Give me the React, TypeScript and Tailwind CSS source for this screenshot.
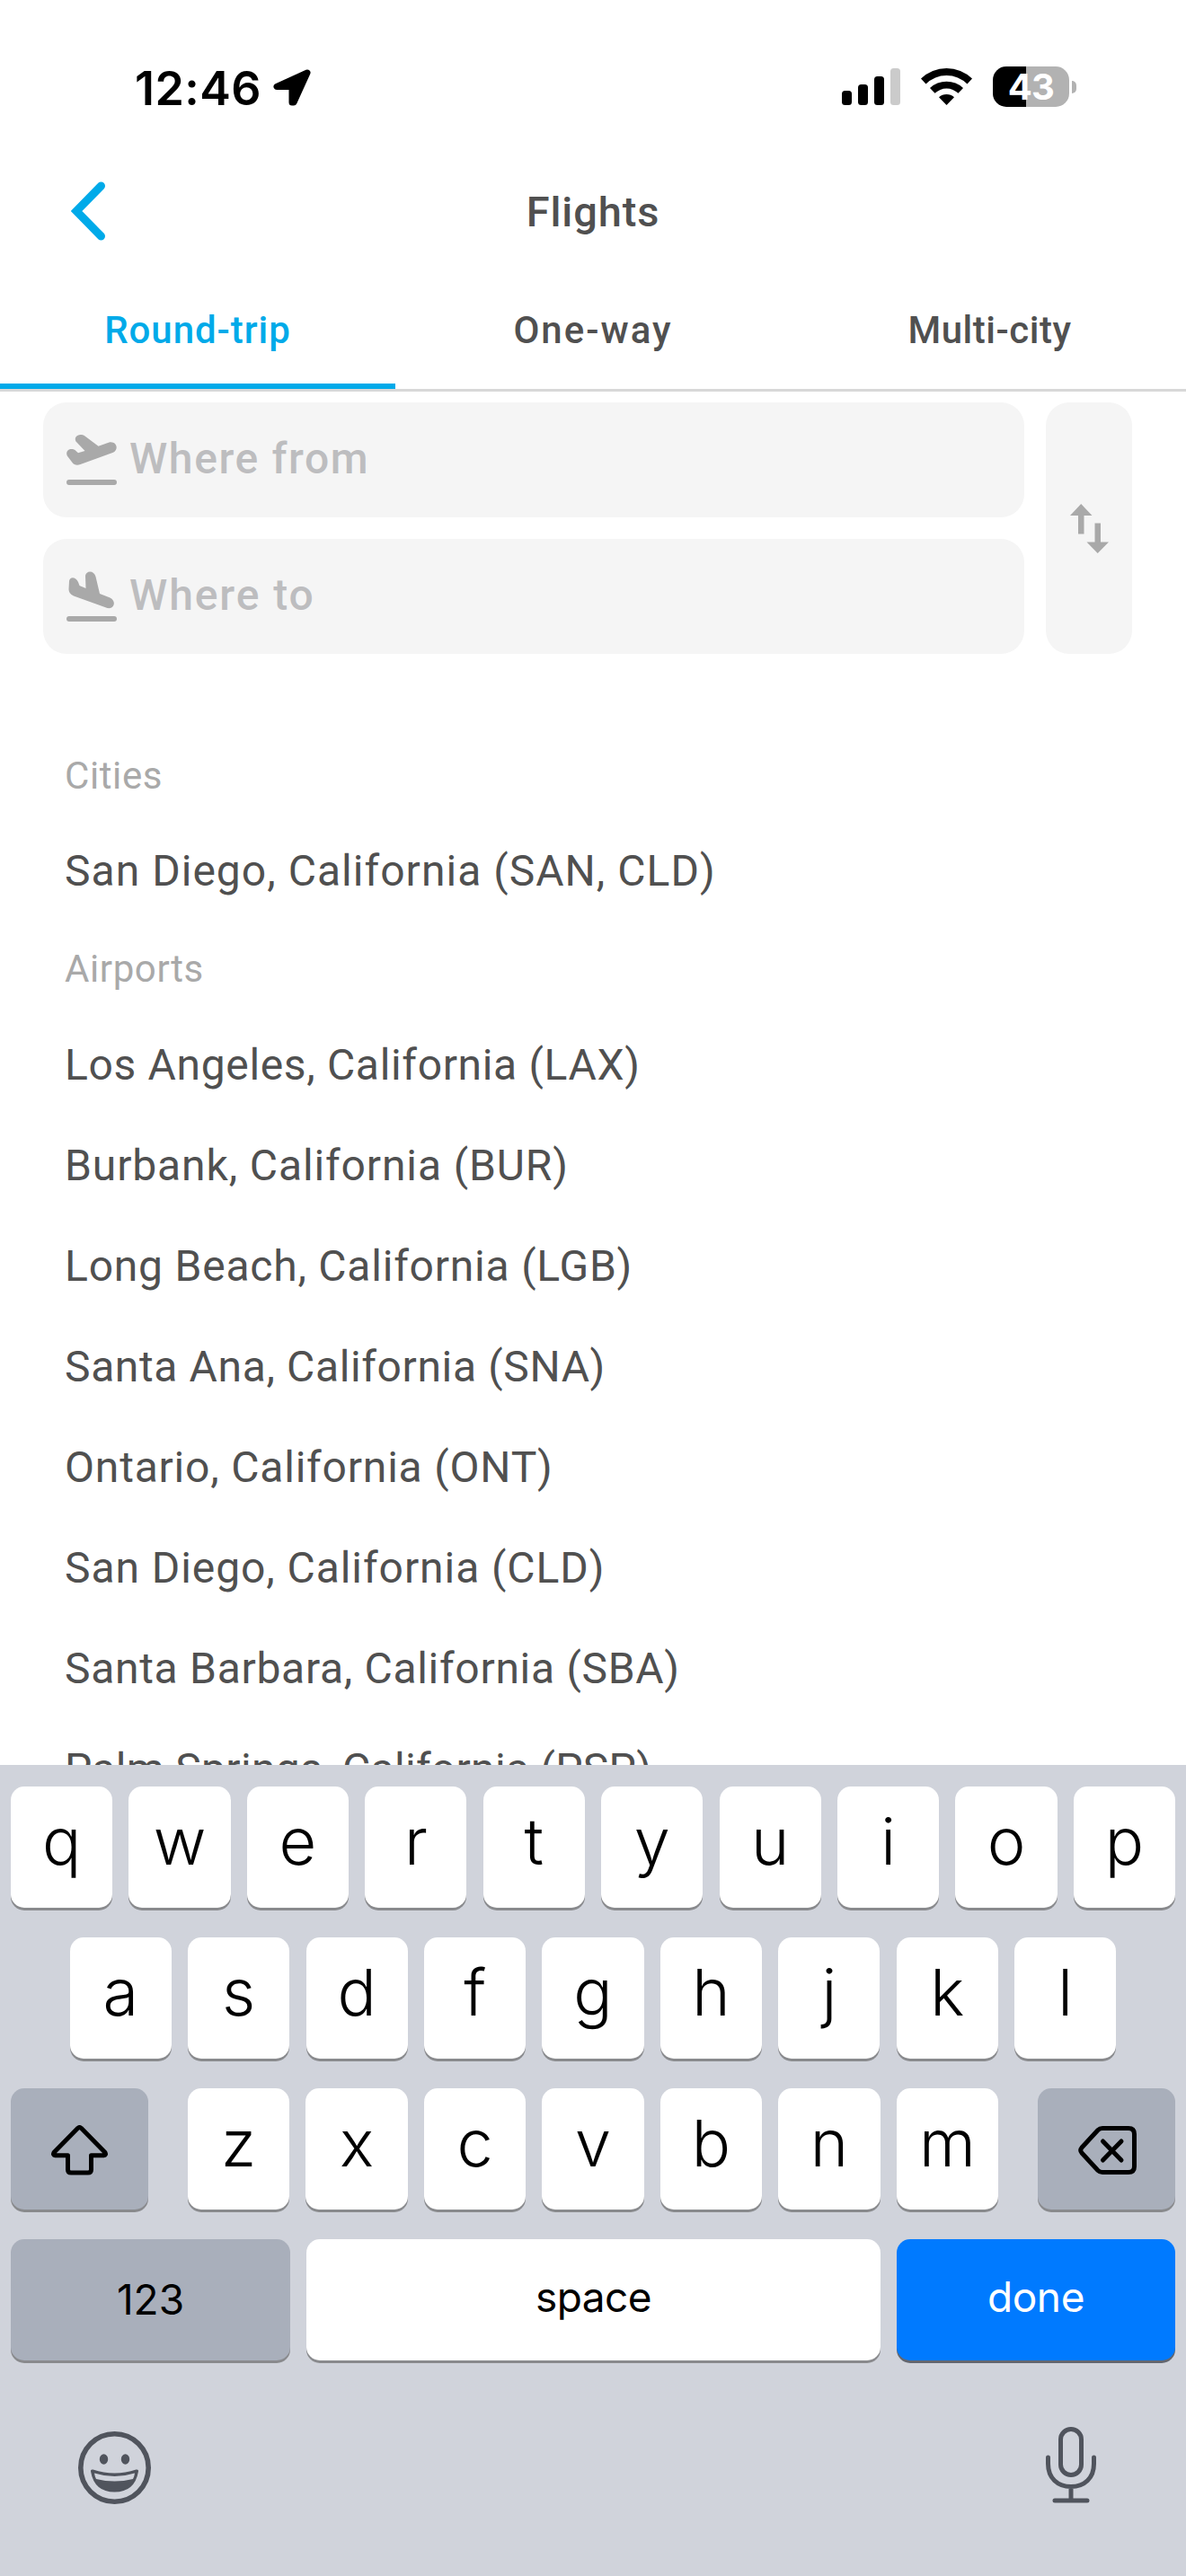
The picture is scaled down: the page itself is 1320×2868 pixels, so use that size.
import type { ReactNode } from "react";

function Key({ children, className = "" }: { children: ReactNode; className?: string }) {
  return (
    <div className={"flex h-[135px] items-center justify-center rounded-[15px] shadow-[0_3px_0_#898a8d] " + className}>
      {children}
    </div>
  );
}

function Letter({ c }: { c: string }) {
  return (
    <Key className="w-[113.2px] bg-white text-black">
      <span className="-mt-[14px] text-[72px] leading-[88px] font-[340]">{c}</span>
    </Key>
  );
}

const places: { name: string; spacing: string }[] = [
  { name: "Los Angeles, California (LAX)", spacing: "tracking-[0.66px]" },
  { name: "Burbank, California (BUR)", spacing: "tracking-[0.88px]" },
  { name: "Long Beach, California (LGB)", spacing: "tracking-[0.78px]" },
  { name: "Santa Ana, California (SNA)", spacing: "tracking-[0.63px]" },
  { name: "Ontario, California (ONT)", spacing: "tracking-[0.8px]" },
  { name: "San Diego, California (CLD)", spacing: "tracking-[0.93px]" },
  { name: "Santa Barbara, California (SBA)", spacing: "tracking-[0.7px]" },
  { name: "Palm Springs, California (PSP)", spacing: "tracking-[0.3px]" },
];

function StatusBar() {
  return (
    <div className="flex h-[176px] items-start pt-[66px] font-['Inter',sans-serif]">
      <div className="ml-[150px] w-[154px] pt-[1px] text-[52px] leading-[63px] font-semibold tracking-[0.4px] text-black">12:46</div>
      <svg className="mt-[11px] h-[42px] w-[43px]" viewBox="0 0 43 42">
        <path d="M38 4 L4 19.500 H21 V37 H23 Z" fill="#000" stroke="#000" strokeWidth="7" strokeLinejoin="round" />
      </svg>
      <svg className="mt-[10px] ml-[590px] h-[41px] w-[65px]" viewBox="0 0 65 41">
        <rect x="0" y="25" width="11" height="16" rx="3.500" />
        <rect x="18" y="18" width="11" height="23" rx="3.500" />
        <rect x="36" y="9" width="11" height="32" rx="3.500" />
        <rect x="54" y="0" width="11" height="41" rx="3.500" fill="#cbcbcb" />
      </svg>
      <svg className="mt-[9px] ml-[23px] h-[42px] w-[57px]" viewBox="0 0 57 42">
        <path d="M0 12.500 A41 41 0 0 1 57 12.500 L51.500 18.500 A32.500 32.500 0 0 0 5.500 18.500 Z" />
        <path d="M10 23 A27 27 0 0 1 47 23 L41.500 28.800 A18.800 18.800 0 0 0 15.500 28.800 Z" />
        <path d="M20 33.300 A12.500 12.500 0 0 1 37 33.300 L28.500 42 Z" />
      </svg>
      <div className="mt-[8px] ml-[23px] flex h-[45px] w-[85px] items-center justify-center rounded-[15px] bg-[linear-gradient(to_right,#000_37px,#b2b2b2_37px)] text-[40px] font-bold tracking-[-0.6px] text-white">
        43
      </div>
      <div className="mt-[24px] ml-[3px] h-[14px] w-[5px] rounded-r-full bg-[#b2b2b2]" />
    </div>
  );
}

function Field({ label, spacing, children }: { label: string; spacing: string; children: ReactNode }) {
  return (
    <div className="flex h-[128px] items-center rounded-[26px] bg-[#f5f5f5] pl-[26px]">
      {children}
      <span className={"-mt-[2px] ml-[14px] text-[48px] font-medium text-[#bdbdbf] " + spacing}>{label}</span>
    </div>
  );
}

export default function App() {
  return (
    <div className="flex h-[2868px] w-[1320px] flex-col overflow-hidden bg-white font-['Roboto',sans-serif]">
      <StatusBar />
      <header className="grid h-[120px] grid-cols-3 items-center">
        <svg className="ml-[79px] -mt-[3px] h-[66px] w-[38px]" viewBox="0 0 38 66">
          <path d="M33.500 5 L6 33 L33.500 61" fill="none" stroke="#00aae9" strokeWidth="9" strokeLinecap="round" />
        </svg>
        <h1 className="text-center text-[47px] font-medium tracking-[0.9px] text-[#505050]">Flights</h1>
      </header>
      <nav className="grid h-[140px] grid-cols-3 border-b-[3px] border-[#d8d8d8] text-center text-[42px] font-medium text-[#505050]">
        <div className="flex items-center justify-center border-b-[6px] border-[#00aae9] pt-[11px] tracking-[0.95px] text-[#00aae9]">Round-trip</div>
        <div className="flex items-center justify-center border-b-[6px] border-transparent pt-[11px] tracking-[2px]">One-way</div>
        <div className="flex items-center justify-center border-b-[6px] border-transparent pt-[11px] pl-[3px] tracking-[0.5px]">Multi-city</div>
      </nav>

      <main className="h-[1529px] overflow-hidden">
        <section className="mt-[12px] flex gap-6 px-12">
          <div className="flex w-[1092px] flex-col gap-6">
            <Field label="Where from" spacing="tracking-[1.6px]">
              <svg className="h-[56px] w-[56px]" viewBox="0 0 56 56" fill="#a9a9a9">
                <path d="M1.500 17.500 C4 15.500 8 15.500 10.500 18 L13 20.300 L20.500 18 L10.500 7.500 C8 3 12.500 -0.500 17 0 Q19 0.300 20.500 1.500 L35.500 12.800 L47.500 8.500 C56 7 58.500 16.500 52 19.800 L15.500 33 C11.500 34.500 8.500 33.500 6.500 31 L0.800 23.500 Q-0.800 20 1.500 17.500 Z" />
                <rect x="0" y="50" width="56" height="6" rx="3" />
              </svg>
            </Field>
            <Field label="Where to" spacing="tracking-[1.9px]">
              <svg className="h-[56px] w-[56px]" viewBox="0 0 56 56" fill="#a9a9a9">
                <path d="M3 11 C3.500 5.500 10.500 6 13 12 L14.500 16 L21.500 19 L21 5 C22 -1.500 31 -1 32.500 6 L37 25 L48.500 29.500 C56 33.500 53 42.500 45.500 41 L8 27.500 C4 25.500 2.500 23 2.500 20 Z" />
                <rect x="0" y="50" width="56" height="6" rx="3" />
              </svg>
            </Field>
          </div>
          <div className="flex w-24 items-center justify-center rounded-[26px] bg-[#f5f5f5]">
            <svg className="h-[55px] w-[43px]" viewBox="0 0 43 55" fill="#a9a9a9">
              <path d="M12.200 0 L24.500 13 H15.500 V33.500 H9 V13 H0 Z" />
              <path d="M27.500 21.500 H34 V42.500 H43 L30.700 55 L18.500 42.500 H27.500 Z" />
            </svg>
          </div>
        </section>

        <section className="mt-[97px] pl-[72px] whitespace-nowrap text-[#505050]">
          <h2 className="flex h-[76px] items-center text-[42px] tracking-[0.6px] text-[#a9a9a9]">Cities</h2>
          <div className="mt-[13px] flex h-[112px] items-center text-[48px] tracking-[1.03px]">San Diego, California (SAN, CLD)</div>
          <h2 className="flex h-[104px] items-center text-[42px] tracking-[0.6px] text-[#a9a9a9]">Airports</h2>
          {places.map((p) => (
            <div key={p.name} className={"flex h-[112px] items-center text-[48px] " + p.spacing}>
              <span>{p.name}</span>
            </div>
          ))}
        </section>
      </main>

      <div className="flex h-[903px] flex-col bg-[#d0d3db] pt-[24px] font-['Inter',sans-serif]">
        <div className="flex flex-col gap-[33px] px-3">
          <div className="flex justify-between">
            {"qwertyuiop".split("").map((c) => <Letter key={c} c={c} />)}
          </div>
          <div className="flex justify-between px-[65.700px]">
            {"asdfghjkl".split("").map((c) => <Letter key={c} c={c} />)}
          </div>
          <div className="flex justify-between">
            <Key className="w-[153px] bg-[#a9afbb]">
              <svg className="mt-[2px] h-[56px] w-[63px]" viewBox="0 0 63 56" fill="none" stroke="#000" strokeWidth="5" strokeLinejoin="round">
                <path d="M29.700 3.300 Q31.500 1.800 33.300 3.300 L60 30.500 Q61.500 33.500 58.500 33.700 H44.500 V49.500 Q44.500 53 41 53 H22 Q18.500 53 18.500 49.500 V33.700 H4.500 Q1.500 33.500 3 30.500 Z" />
              </svg>
            </Key>
            <div className="flex w-[902px] justify-between">
              {"zxcvbnm".split("").map((c) => <Letter key={c} c={c} />)}
            </div>
            <Key className="w-[153px] bg-[#a9afbb]">
              <svg className="mt-[2px] ml-[2px] h-[54px] w-[65px]" viewBox="0 0 65 54" fill="none" stroke="#000" strokeWidth="5" strokeLinejoin="round" strokeLinecap="round">
                <path d="M27 2.500 H56 Q62.500 2.500 62.500 9 V45 Q62.500 51.500 56 51.500 H27 Q24 51.500 22 49.500 L4 30 Q1.500 27 4 24 L22 4.500 Q24 2.500 27 2.500 Z" />
                <path d="M27.500 17 L48 38 M48 17 L27.500 38" />
              </svg>
            </Key>
          </div>
          <div className="flex justify-between text-[46px]">
            <Key className="w-[311px] bg-[#a9afbb] text-black">123</Key>
            <Key className="w-[639px] bg-white pb-[7px] tracking-[-0.6px] text-black">space</Key>
            <Key className="w-[310px] bg-[#007aff] pb-[7px] tracking-[-0.4px] text-white shadow-[0_3px_0_#63666f]">done</Key>
          </div>
        </div>
        <div className="mt-[74px] flex items-start justify-between pr-[100px] pl-[87px]">
          <svg className="mt-[5px] h-[81px] w-[81px]" viewBox="0 0 81 81">
            <circle cx="40.500" cy="40.500" r="37.700" fill="none" stroke="#50545d" strokeWidth="5.600" />
            <ellipse cx="28.500" cy="31" rx="4.700" ry="5.700" fill="#50545d" />
            <ellipse cx="52.500" cy="31" rx="4.700" ry="5.700" fill="#50545d" />
            <path d="M14 44.500 Q13.500 42 16.500 42.500 Q40.500 50.500 64.500 42.500 Q67.500 42 67 44.500 Q63 67.500 40.500 67.500 Q18 67.500 14 44.500 Z" fill="#50545d" />
            <path d="M18 46.500 Q40.500 53.500 63 46.500 Q62.500 50.500 61 53 Q40.500 58 20 53 Q18.500 50.500 18 46.500 Z" fill="#d0d3db" />
          </svg>
          <svg className="h-[85px] w-[56px]" viewBox="0 0 56 85" fill="none" stroke="#50545d" strokeWidth="5" strokeLinecap="round">
            <rect x="16.500" y="2.500" width="23" height="51" rx="11.500" />
            <path d="M2.500 34 V41 C2.500 57 13 66.500 28 66.500 S53.500 57 53.500 41 V34 M28 66.500 V82 M10 82 H46" />
          </svg>
        </div>
      </div>
    </div>
  );
}
